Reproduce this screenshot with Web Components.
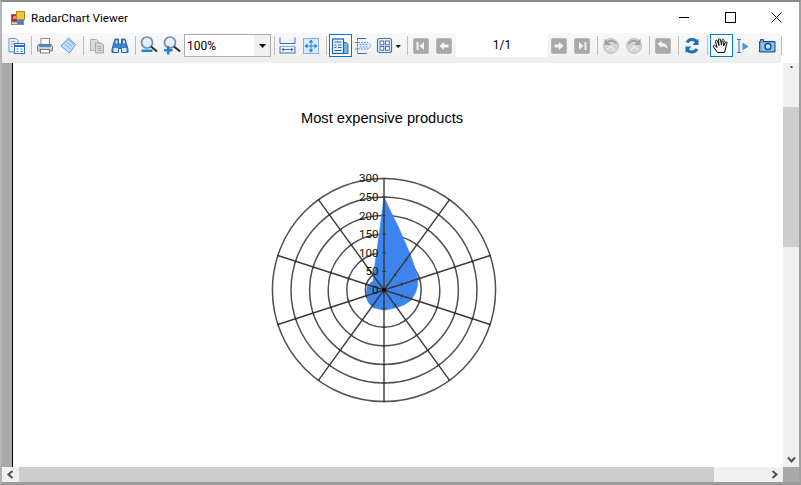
<!DOCTYPE html>
<html><head><meta charset="utf-8"><style>
html,body{margin:0;padding:0;background:#fff;overflow:hidden}
</style></head><body>
<rv-window>
  <rv-titlebar slot="title">RadarChart Viewer</rv-titlebar>
  <rv-toolbar slot="tools">
    <rv-tool icon="tree"></rv-tool><rv-sep></rv-sep>
    <rv-tool icon="print"></rv-tool><rv-tool icon="export"></rv-tool><rv-sep></rv-sep>
    <rv-tool icon="copy"></rv-tool><rv-tool icon="find"></rv-tool><rv-sep></rv-sep>
    <rv-tool icon="zoomout"></rv-tool><rv-tool icon="zoomin"></rv-tool>
    <rv-combo>100%</rv-combo><rv-sep></rv-sep>
    <rv-tool icon="fitw"></rv-tool><rv-tool icon="fitp"></rv-tool><rv-sep></rv-sep>
    <rv-tool icon="page" selected></rv-tool><rv-tool icon="cont"></rv-tool><rv-tool icon="multi" wide></rv-tool><rv-sep></rv-sep>
    <rv-tool icon="first"></rv-tool><rv-tool icon="prev"></rv-tool>
    <rv-pagebox>1/1</rv-pagebox>
    <rv-tool icon="next"></rv-tool><rv-tool icon="last"></rv-tool><rv-sep></rv-sep>
    <rv-tool icon="undo"></rv-tool><rv-tool icon="redo"></rv-tool><rv-sep></rv-sep>
    <rv-tool icon="back"></rv-tool><rv-sep></rv-sep>
    <rv-tool icon="refresh"></rv-tool><rv-sep></rv-sep>
    <rv-tool icon="hand" selected></rv-tool><rv-tool icon="select"></rv-tool><rv-tool icon="snap"></rv-tool><rv-sep end></rv-sep>
  </rv-toolbar>
  <rv-report slot="report" heading="Most expensive products"></rv-report>
  <rv-scrollbar slot="vbar" orient="v"></rv-scrollbar>
  <rv-scrollbar slot="hbar" orient="h"></rv-scrollbar>
</rv-window>
<script>
const NAVBOX=`<rect x="2.500" y="2.500" width="15" height="15" rx="1.500" fill="#a8a8a8" stroke="#b8b8b8"/>`;
const ICONS={
tree:`<path d="M3 2.500h7l2 2v11.500H3z" fill="#e8f2fc" stroke="#5b9bdc"/><path d="M5 5.500h4M5 8h3" stroke="#e58a3c"/><path d="M5 10.500h2" stroke="#d66"/><rect x="8.500" y="7.500" width="10" height="10" fill="#fff" stroke="#2a6fc0"/><path d="M8.500 10h10" stroke="#2a6fc0" stroke-width="2"/><path d="M10.500 13h2M14.500 13h2M10.500 15.500h2M14.500 15.500h2" stroke="#3b82d0"/>`,
print:`<rect x="6" y="2.500" width="8.500" height="6" fill="#fff" stroke="#8a8a8a"/><path d="M3.500 8.500h13l1 2v4.500H2.500v-4.500z" fill="#cfcfcf" stroke="#7a7a7a"/><rect x="4" y="9" width="12" height="2" fill="#3a92e4"/><rect x="5.500" y="13.500" width="9" height="3.500" fill="#fff" stroke="#7a7a7a"/>`,
export:`<path d="M10.500 2l7 6.500-6 8.500L3 10z" fill="#c6def8" stroke="#5a9ce2"/><path d="M8 5.500l6 5M6.500 8l6 5M10 3.500l6 5" stroke="#7db2ea"/>`,
copy:`<path d="M3.500 3.500h6l2 2v9h-8z" fill="#dadada" stroke="#b0b0b0"/><path d="M8.500 7h6l2 2v8h-8z" fill="#d6d6d6" stroke="#a8a8a8"/><path d="M10.500 10.500h4M10.500 12.500h4M10.500 14.500h4" stroke="#ababab"/>`,
find:`<path d="M5 3h3.500v5h3V3H15l3 10v3.500h-6.500v-4h-3v4H2V13z" fill="#3f7fcb" stroke="#2a64ab"/><rect x="3.500" y="12" width="4.500" height="4" fill="#d6e8fa"/><rect x="12" y="12" width="4.500" height="4" fill="#d6e8fa"/><rect x="5.500" y="4.500" width="2" height="3" fill="#c4dcf6"/><rect x="13" y="4.500" width="2" height="3" fill="#c4dcf6"/>`,
zoomout:`<circle cx="8" cy="6.500" r="5.500" fill="#e4eff9" stroke="#6f8ea8" stroke-width="1.700"/><path d="M12 10.500l6 5" stroke="#2a2a2a" stroke-width="2"/><rect x="2.500" y="13.500" width="11" height="2.500" fill="#1f84cf"/>`,
zoomin:`<circle cx="8" cy="6.500" r="5.500" fill="#e4eff9" stroke="#6f8ea8" stroke-width="1.700"/><path d="M12 10.500l6 5" stroke="#2a2a2a" stroke-width="2"/><path d="M2 13h3v-3h2.500v3h3v2.500h-3v3H5v-3H2z" fill="#1f84cf"/>`,
fitw:`<path d="M2 1.500v6M17 1.500v6M2 7.500h15" stroke="#2d74c4" fill="none"/><path d="M2 10.500h15" stroke="#7fb0e0"/><path d="M2 10.500v7M17 10.500v7M2 17h15" stroke="#2d74c4" fill="none"/><path d="M5 13.500h9" stroke="#2d74c4"/><path d="M3.500 13.500l2.500-2v4zM15.500 13.500l-2.500-2v4z" fill="#2d74c4"/>`,
fitp:`<rect x="2.500" y="2.500" width="15" height="15" fill="#dcebfa" stroke="#7fb0e6"/><path d="M10 3.500l-2.500 3h5zM10 16.500l-2.500-3h5zM3.500 10l3-2.500v5zM16.500 10l-3-2.500v5z" fill="#2a7fd0"/><path d="M10 6v8M6 10h8" stroke="#2a7fd0"/>`,
page:`<path d="M12 6.500h4.500l1.500 2v9h-6z" fill="#7fb0e6" stroke="#2a6fc0"/><rect x="2.500" y="3" width="11" height="14.500" fill="#e8f2fc" stroke="#1f5fae" stroke-width="1.200"/><path d="M4.500 6h7M4.500 9h2M8 9h3.500M4.500 11.500h2M8 11.500h3.500M4.500 14.500h7" stroke="#1f5fae" stroke-width="1.200"/>`,
cont:`<path d="M4.500 2.500h9M4.500 17.500h9" stroke="#2a6fc0"/><path d="M2 6.500h13l3 3-3 3.500H2" fill="#eef5fd" stroke="#4f8fd8" stroke-dasharray="2 1"/><path d="M4.500 2.500v15" stroke="#2a6fc0" stroke-dasharray="2 1"/><path d="M6.500 8.500h8M6.500 11h8" stroke="#4f8fd8" stroke-dasharray="2 1"/>`,
multi:`<rect x="1.500" y="2.500" width="14" height="14" rx="2" fill="#f4f8fd" stroke="#3f6fc0" stroke-width="1.200"/><rect x="4" y="5" width="3.800" height="3.800" fill="#fff" stroke="#3f6fc0"/><rect x="9.500" y="5" width="3.800" height="3.800" fill="#fff" stroke="#3f6fc0"/><rect x="4" y="10.500" width="3.800" height="3.800" fill="#fff" stroke="#3f6fc0"/><rect x="9.500" y="10.500" width="3.800" height="3.800" fill="#fff" stroke="#3f6fc0"/><path d="M19.500 9h5.500l-2.750 3z" fill="#111"/>`,
first:NAVBOX+`<path d="M5.500 6h2v8h-2zM8.500 10l4.500-4v8z" fill="#f4f4f4"/>`,
prev:NAVBOX+`<path d="M5.500 10l4.500-4v2.500h4.500v3H10V14z" fill="#f4f4f4"/>`,
next:NAVBOX+`<path d="M14.500 10L10 6v2.500H5.500v3H10V14z" fill="#f4f4f4"/>`,
last:NAVBOX+`<path d="M12.500 6h2v8h-2zM11.500 10L7 6v8z" fill="#f4f4f4"/>`,
undo:`<circle cx="10" cy="10" r="7.500" fill="#d4d4d4" stroke="#c2c2c2"/><path d="M3.500 2.500v6.500h6.500z" fill="#a4a4a4"/><path d="M5.500 7a6 6 0 0 1 10 1" fill="none" stroke="#a4a4a4" stroke-width="1.800"/><path d="M10 10l3.500 5M10 10l-4 3.500" stroke="#efefef" stroke-width="1.300"/>`,
redo:`<circle cx="10" cy="10" r="7.500" fill="#d4d4d4" stroke="#c2c2c2"/><path d="M16.500 2.500v6.500H10z" fill="#a4a4a4"/><path d="M14.500 7a6 6 0 0 0-10 1" fill="none" stroke="#a4a4a4" stroke-width="1.800"/><path d="M10 10l-3.500 5M10 10l4 3.500" stroke="#efefef" stroke-width="1.300"/>`,
back:NAVBOX+`<path d="M4.500 8l4-3.500V7c3.500 0 6 1.500 6.500 6.500-1-2-3-3-6.500-3V12z" fill="#f4f4f4"/>`,
refresh:`<path d="M15 6A6 6 0 0 0 5 6.500" fill="none" stroke="#1a70bd" stroke-width="3"/><path d="M16.500 2.500v6.500H10.500z" fill="#1a70bd"/><path d="M5 13.500A6 6 0 0 0 15 13" fill="none" stroke="#1a70bd" stroke-width="3"/><path d="M3.500 17v-6.500h6z" fill="#1a70bd"/>`,
hand:`<path d="M6.500 16.500L2.500 11c-.8-1.200.8-2.300 1.800-1.300L6 11.500 4.500 5.500c-.3-1.300 1.500-1.800 1.900-.5L8 9.500 7.500 3.800c0-1.400 1.900-1.400 2 0L10.500 9l.7-4.800c.2-1.300 2-1 1.900.3L12.500 10l1.800-3.700c.6-1.100 2-.4 1.600.8L14.500 13l-1 3.500z" fill="#fff" stroke="#000" stroke-width="1"/>`,
select:`<path d="M3 3.500h4M3 16.500h4M5 3.500v13" stroke="#2a6fc0" fill="none"/><path d="M8.500 6.500l6 4-6 4z" fill="#4a94e4"/>`,
snap:`<path d="M2.500 5.500h1V3.500h3v2h11.500v10.500H2.500z" fill="#6d9fd6" stroke="#1f4f8e"/><rect x="4" y="7" width="13" height="7.500" fill="#8fc0ee"/><circle cx="11" cy="10.500" r="3" fill="#c4e2fa" stroke="#14518f" stroke-width="1.400"/>`
};

function define(name,css,html,setup){
  customElements.define(name,class extends HTMLElement{
    connectedCallback(){
      this.attachShadow({mode:'open'}).innerHTML=`<style>${css}</style>${typeof html==='function'?html(this):html}`;
      setup&&setup(this);
    }
  });
}
define('rv-window',`
:host{display:grid;width:801px;height:485px;box-sizing:border-box;
 grid-template-columns:1fr 16px;grid-template-rows:31px 30px 1fr 15px;
 border:2px solid #8c8c8c;border-left-color:#b4b4b4;border-right-color:#a0a0a0;border-bottom:3px solid #9a9a9a;background:#fff;
 font-family:"Liberation Sans",Arial,sans-serif;color:#000}
::slotted([slot=title]),::slotted([slot=tools]){grid-column:1/3}
.corner{background:#a9a9a9}
`,`<slot name="title"></slot><slot name="tools"></slot><slot name="report"></slot><slot name="vbar"></slot><slot name="hbar"></slot><div class="corner"></div>`);

define('rv-titlebar',`
:host{display:flex;align-items:center;height:31px;padding-left:9px;background:#fff;font:11.65px Roboto,"Open Sans",sans-serif;color:#000}
.ico{width:14px;height:14px;margin-right:6px}
.text{flex:1}
.btn{width:46px;height:31px;display:flex;align-items:center;justify-content:center}
.btns{display:flex}
svg{display:block}
`,`<svg class="ico" viewBox="0 0 14 14" width="14" height="14"><rect x="0.500" y="3.500" width="6" height="8" fill="#b22" stroke="#777"/><rect x="2" y="5" width="3" height="3" fill="#e88"/><rect x="5.500" y="0.500" width="8" height="8" fill="#f3c63c" stroke="#a98a20"/><rect x="6.500" y="8.500" width="6" height="5" fill="#4d7fd0" stroke="#888"/><rect x="0.500" y="11" width="6" height="2.500" fill="#ddd" stroke="#888"/></svg>
<span class="text"><slot></slot></span>
<div class="btns">
<div class="btn"><svg width="11" height="11" viewBox="0 0 11 11"><path d="M0 5.500h10" stroke="#000" fill="none"/></svg></div>
<div class="btn"><svg width="11" height="11" viewBox="0 0 11 11"><rect x="0.500" y="0.500" width="10" height="10" fill="none" stroke="#000"/></svg></div>
<div class="btn"><svg width="11" height="11" viewBox="0 0 11 11"><path d="M0.500 0.500l10 10M10.500 0.500l-10 10" stroke="#000" fill="none"/></svg></div>
</div>`);

define('rv-toolbar',`
:host{display:block;height:30px;background:#fff}
.bar{display:flex;align-items:flex-start;width:779px;padding:1px 0 0 3px;height:30px;box-sizing:border-box;background:linear-gradient(#f8f8f8,#f3f3f3 55%,#eeeeee)}
`,`<div class="bar"><slot></slot></div>`);

customElements.define('rv-tool',class extends HTMLElement{
  connectedCallback(){
    const w=this.hasAttribute('wide')?29:23;
    this.attachShadow({mode:'open'}).innerHTML=`<style>
:host{display:flex;align-items:center;flex:none;box-sizing:border-box;width:${w}px;height:23px;border:1px solid transparent}
:host([selected]){border-color:#0078d7;background:#fff}
svg{display:block;overflow:visible}
</style><svg width="${w===29?26:20}" height="20" viewBox="0 0 ${w===29?26:20} 20">${ICONS[this.getAttribute('icon')]}</svg>`;
  }
});
define('rv-sep',`
:host{display:flex;justify-content:center;flex:none;width:6px;height:23px}
:host([end]){width:3px}
i{display:block;width:1px;height:19px;margin-top:2px;background:#bdbdbd}
:host([end]) i{margin-left:1px}
`,`<i></i>`);
define('rv-combo',`
:host{display:flex;flex:none;box-sizing:border-box;width:87px;height:23px;border:1px solid #adadad;background:#fff;font:12px Roboto,"Open Sans",sans-serif;color:#000;align-items:center;padding-left:2px}
.t{flex:1}
.a{width:16px;align-self:stretch;background:#f0f0f0;display:flex;align-items:center;justify-content:center}
`,`<span class="t"><slot></slot></span><span class="a"><svg width="7" height="4" viewBox="0 0 7 4"><path d="M0 0h7L3.500 4z" fill="#000"/></svg></span>`);
define('rv-pagebox',`
:host{display:flex;flex:none;align-items:center;justify-content:center;width:92px;height:24px;margin-top:-1px;background:#fff;font:12px Roboto,"Open Sans",sans-serif;color:#000}
`,`<slot></slot>`);

const chev=d=>`<svg width="9" height="9" viewBox="0 0 9 9"><path d="${d}" fill="none" stroke="#505050" stroke-width="2"/></svg>`;
define('rv-scrollbar',`
:host{display:flex;background:#f0f0f0;box-sizing:border-box}
:host([orient=v]){flex-direction:column;align-items:stretch}
:host([orient=h]){flex-direction:row}
.arrow{display:flex;align-items:center;justify-content:center;flex:none}
:host([orient=v]) .arrow{height:15px}
:host([orient=v]) .first{height:5px;align-items:flex-end;overflow:hidden}
:host([orient=h]) .arrow{width:17px}
.gap{flex:none;height:39px}
.thumb{background:#cdcdcd;flex:none}
:host([orient=v]) .thumb{height:140px}
:host([orient=h]) .thumb{width:695px}
.rest{flex:1}
`,el=>el.getAttribute('orient')==='v'
  ?`<div class="arrow first"><svg width="9" height="2" viewBox="0 0 9 2"><path d="M3.500 0h2v2h-2z" fill="#505050"/></svg></div><div class="gap"></div><div class="thumb"></div><div class="rest"></div><div class="arrow">${chev('M1 2.500l3.500 4 3.500-4')}</div>`
  :`<div class="arrow">${chev('M6.500 1l-4 3.500 4 3.500')}</div><div class="thumb"></div><div class="rest"></div><div class="arrow">${chev('M2.500 1l4 3.500-4 3.500')}</div>`);

define('rv-report',`
:host{display:flex;min-width:0;overflow:hidden;background:#fff}
.side{flex:none;width:10px;background:#a9a9a9;border-right:1px solid #000}
.page{flex:1;display:flex;flex-direction:column;padding:46px 0 0 288px;min-width:0}
h1{margin:0;font:400 14.67px/18px "Liberation Sans",Arial,sans-serif;white-space:nowrap}
`,h=>`<div class="side"></div><div class="page"><h1>${h.getAttribute('heading')}</h1><rv-radar></rv-radar></div>`);

const BLOB=[[0,-93.3],[6,-80],[14,-64],[26.3,-35.7],[31,-22],[34,-10.7],[33.5,-4],[32.3,1],[27.3,10.3],[20,15],[12.3,17.7],[0,20.3],[-11,17.7],[-15,13.5],[-17.7,7.7],[-17.5,2],[-16.7,-4],[-13,-7.5],[-11,-9],[-9.3,-24],[-4.5,-58],[-2,-78]];
customElements.define('rv-radar',class extends HTMLElement{
  connectedCallback(){
    const cx=125,cy=126,step=18.6,R=step*6;
    let rings='',spokes='',ticks='',labels='';
    for(let i=1;i<=6;i++)rings+=`<circle cx="${cx}" cy="${cy}" r="${step*i}" fill="none" stroke="#505050" stroke-width="1.500"/>`;
    for(let a=0;a<10;a++){
      const t=a*Math.PI/5,sx=Math.sin(t),co=Math.cos(t);
      spokes+=`<line x1="${cx}" y1="${cy}" x2="${(cx+sx*R).toFixed(2)}" y2="${(cy-co*R).toFixed(2)}" stroke="#3a3a3a" stroke-width="1.400"/>`;
      for(let i=1;i<=6;i++){
        const px=cx+sx*step*i,py=cy-co*step*i,k=1.8;
        ticks+=`<line x1="${(px-co*k).toFixed(2)}" y1="${(py-sx*k).toFixed(2)}" x2="${(px+co*k).toFixed(2)}" y2="${(py+sx*k).toFixed(2)}" stroke="#333" stroke-width="1"/>`;
      }
    }
    for(let i=0;i<=6;i++)labels+=`<text x="${cx-5.5}" y="${cy-step*i+4}" text-anchor="end">${i*50}</text>`;
    const blob='M'+BLOB.map(([x,y])=>`${(cx+x).toFixed(1)} ${(cy+y).toFixed(1)}`).join('L')+'Z';
    this.attachShadow({mode:'open'}).innerHTML=`<style>
:host{display:block;width:260px;height:250px;margin:37px 0 0 -42px}
svg{display:block;overflow:visible}
text{font:11.600px Roboto,"Open Sans",sans-serif;fill:#111}
</style><svg width="260" height="250" viewBox="0 0 260 250">
${rings}
<path d="${blob}" fill="#3d84ee" stroke="#3d84ee" stroke-width="0.500" stroke-linejoin="round"/>
${spokes}${ticks}
<circle cx="${cx}" cy="${cy}" r="2" fill="#000"/>
${labels}
</svg>`;
  }
});
</script>
</body></html>
